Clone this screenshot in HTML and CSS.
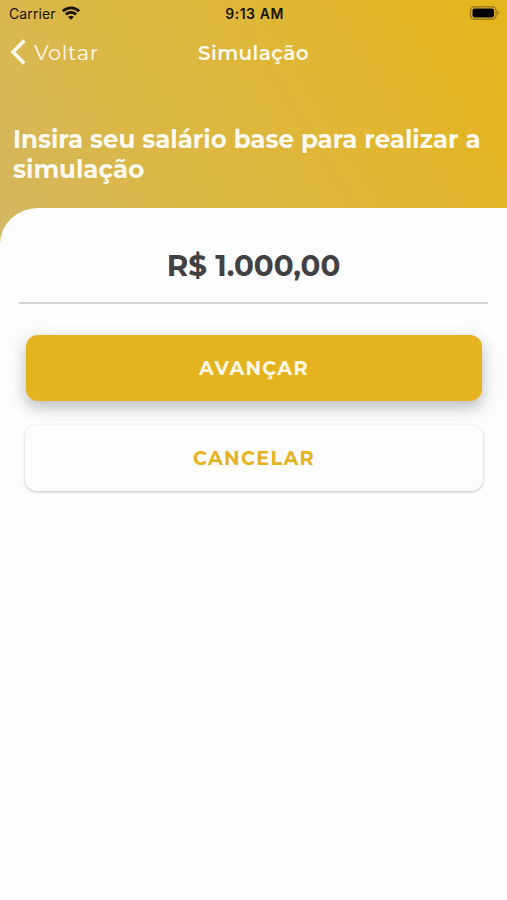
FILE: index.html
```html
<!DOCTYPE html>
<html lang="pt-BR">
<head>
<meta charset="utf-8">
<title>Simulação</title>
<link rel="stylesheet" href="styles.css">
</head>
<body>
<header class="header">
  <div class="status">
    <div class="carrier"><span>Carrier</span>
      <svg class="wifi" width="18" height="14" viewBox="0 0 18 14" fill="none" stroke="#171307" stroke-width="2.8"><path d="M.9 5.200C5.500.8 12.500.8 17.100 5.200M3.900 8.500C6.800 5.700 11.200 5.700 14.100 8.500"/><path d="M9 13.800L6.100 10.900Q9 8.600 11.900 10.900Z" fill="#171307" stroke="none"/></svg>
    </div>
    <span class="time">9:13 AM</span>
    <svg class="battery" width="31" height="14" viewBox="0 0 31 14"><rect x="1.500" y=".8" width="25.500" height="12.400" rx="3.800" fill="none" stroke="#9a7a1b" stroke-width="1.500"/><rect x="3.500" y="2.600" width="21.500" height="8.800" rx="1.800" fill="#000"/><path d="M28.500 4.800Q31.500 7 28.500 9.200Z" fill="#9a7a1b"/></svg>
  </div>
  <nav class="nav">
    <a class="back"><svg width="16" height="26" viewBox="0 0 16 26" fill="none" stroke="#fffaf0" stroke-width="3.600"><path d="M14.300 1.500L3 13L14.300 24.500"/></svg><span>Voltar</span></a>
    <span class="title">Simulação</span>
  </nav>
  <h1 class="heading"><span class="line">Insira seu salário base para realizar a</span> <span class="line">simulação</span></h1>
</header>
<main class="sheet">
  <div class="field"><span class="amount">R$ 1.000,00</span></div>
  <button class="btn primary"><span>AVANÇAR</span></button>
  <button class="btn secondary"><span>CANCELAR</span></button>
</main>
</body>
</html>
```
FILE: styles.css
```css
* { box-sizing: border-box; }
body {
  margin: 0;
  height: 900px;
  overflow: hidden;
  background: #fdfdfd;
  font-family: Montserrat, Inter, sans-serif;
}
.header {
  height: 242px;
  background: linear-gradient(58deg, #d3b761 0%, #dbb749 28%, #e0b633 65%, #e5b51e 95%);
  color: #fffaf0;
}
.status {
  display: grid;
  grid-template-columns: 1fr auto 1fr;
  align-items: center;
  height: 27px;
  padding: 0 7px 0 9px;
  font-family: Inter, sans-serif;
  font-size: 14px;
  color: #171307;
}
.carrier { display: flex; align-items: center; gap: 6px; letter-spacing: .1px; }
.wifi { margin-top: -2px; }
.time { font-weight: 600; letter-spacing: .55px; }
.battery { justify-self: end; margin-top: -2px; }
.nav {
  display: grid;
  grid-template-columns: 1fr auto 1fr;
  align-items: center;
  height: 50px;
  padding: 0 10px;
  font-size: 20px;
}
.back { display: flex; align-items: center; gap: 8px; font-size: 21px; letter-spacing: .6px; }
.title { font-weight: 600; letter-spacing: .35px; padding-top: 1px; }
.heading { margin: 47px 0 0 13px; font-size: 24.5px; font-weight: 700; line-height: 30px; }
.line { display: block; white-space: nowrap; }
.sheet {
  height: 692px;
  margin-top: -34px;
  padding: 0 25px;
  border-radius: 38px 0 0 0 / 36px 0 0 0;
  background: #fdfdfd;
}
.field {
  height: 96px;
  margin: 0 -6px 31px;
  padding-top: 40px;
  border-bottom: 2px solid #d2d2d3;
  text-align: center;
}
.amount { color: #414143; font-size: 29.3px; font-weight: 700; line-height: 36px; }
.btn {
  display: flex;
  align-items: center;
  justify-content: center;
  width: 456px;
  height: 66px;
  margin-left: 1px;
  border: 0;
  border-radius: 12px;
  font-family: inherit;
  font-size: 19.3px;
  font-weight: 700;
  letter-spacing: 1.3px;
}
.primary {
  background: #e5b31e;
  color: #fff8e6;
  box-shadow: 0 6px 16px rgba(40, 40, 50, .32);
}
.secondary {
  position: relative;
  width: 458px;
  margin: 24px 0 0 0;
  background: #fdfdfd;
  color: #e5b31e;
  box-shadow: 0 1px 3px rgba(0, 0, 0, .24);
}
```
